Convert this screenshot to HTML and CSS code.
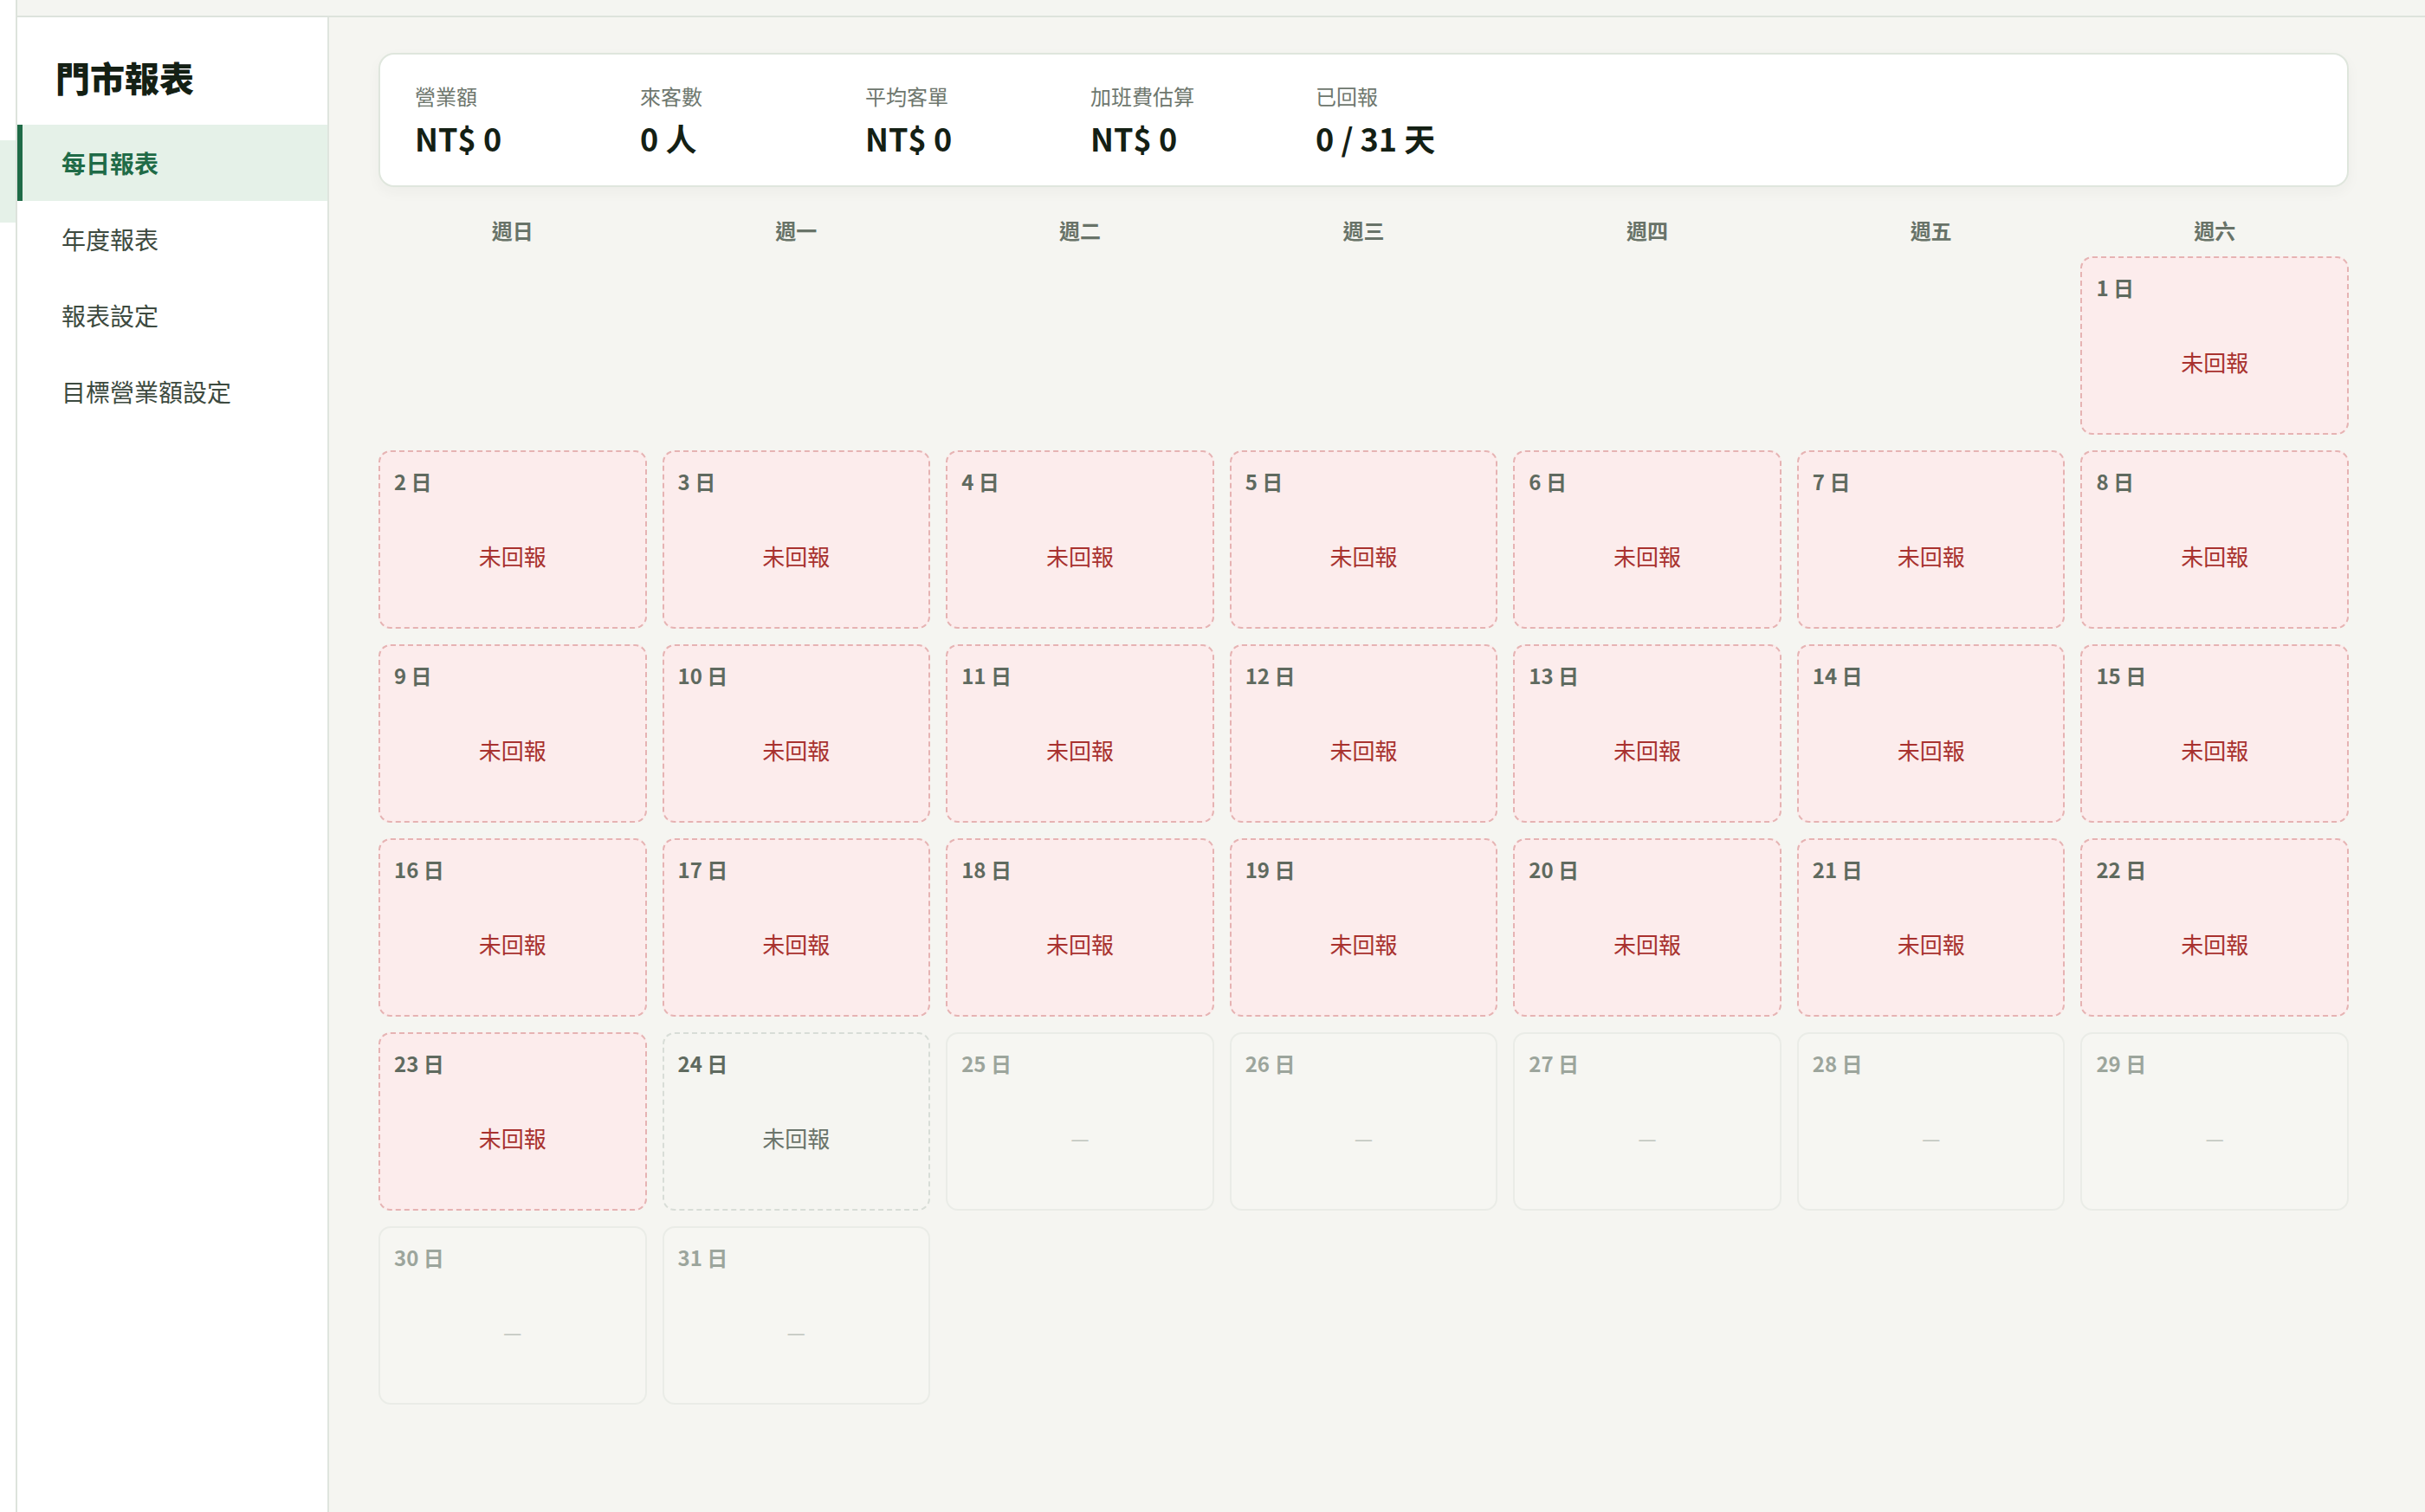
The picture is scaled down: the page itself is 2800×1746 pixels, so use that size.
FILE: index.html
```html
<!DOCTYPE html>
<html lang="zh-Hant">
<head>
	<meta charset="utf-8">
	<title>門市報表</title>
	<link rel="stylesheet" href="styles.css">
</head>
<body>

<div class="shell">
	<div class="edge"><div class="edge-mark"></div></div>

	<div class="app">
		<div class="topbar"></div>

		<div class="layout">
			<aside class="sidebar">
				<h1 class="brand">門市報表</h1>
				<nav class="nav">
					<a class="active" href="#">每日報表</a>
					<a href="#">年度報表</a>
					<a href="#">報表設定</a>
					<a href="#">目標營業額設定</a>
				</nav>
			</aside>

			<main class="main">
				<section class="summary">
					<div class="stat">
						<div class="stat-label">營業額</div>
						<div class="stat-value">NT$ 0</div>
					</div>
					<div class="stat">
						<div class="stat-label">來客數</div>
						<div class="stat-value">0 人</div>
					</div>
					<div class="stat">
						<div class="stat-label">平均客單</div>
						<div class="stat-value">NT$ 0</div>
					</div>
					<div class="stat">
						<div class="stat-label">加班費估算</div>
						<div class="stat-value">NT$ 0</div>
					</div>
					<div class="stat">
						<div class="stat-label">已回報</div>
						<div class="stat-value">0 / 31 天</div>
					</div>
				</section>

				<section class="calendar">
					<div class="weekday">週日</div>
					<div class="weekday">週一</div>
					<div class="weekday">週二</div>
					<div class="weekday">週三</div>
					<div class="weekday">週四</div>
					<div class="weekday">週五</div>
					<div class="weekday">週六</div>

					<div class="blank"></div>
					<div class="blank"></div>
					<div class="blank"></div>
					<div class="blank"></div>
					<div class="blank"></div>
					<div class="blank"></div>
					<div class="day missed"><div class="day-num">1 日</div><div class="day-status">未回報</div></div>

					<div class="day missed"><div class="day-num">2 日</div><div class="day-status">未回報</div></div>
					<div class="day missed"><div class="day-num">3 日</div><div class="day-status">未回報</div></div>
					<div class="day missed"><div class="day-num">4 日</div><div class="day-status">未回報</div></div>
					<div class="day missed"><div class="day-num">5 日</div><div class="day-status">未回報</div></div>
					<div class="day missed"><div class="day-num">6 日</div><div class="day-status">未回報</div></div>
					<div class="day missed"><div class="day-num">7 日</div><div class="day-status">未回報</div></div>
					<div class="day missed"><div class="day-num">8 日</div><div class="day-status">未回報</div></div>

					<div class="day missed"><div class="day-num">9 日</div><div class="day-status">未回報</div></div>
					<div class="day missed"><div class="day-num">10 日</div><div class="day-status">未回報</div></div>
					<div class="day missed"><div class="day-num">11 日</div><div class="day-status">未回報</div></div>
					<div class="day missed"><div class="day-num">12 日</div><div class="day-status">未回報</div></div>
					<div class="day missed"><div class="day-num">13 日</div><div class="day-status">未回報</div></div>
					<div class="day missed"><div class="day-num">14 日</div><div class="day-status">未回報</div></div>
					<div class="day missed"><div class="day-num">15 日</div><div class="day-status">未回報</div></div>

					<div class="day missed"><div class="day-num">16 日</div><div class="day-status">未回報</div></div>
					<div class="day missed"><div class="day-num">17 日</div><div class="day-status">未回報</div></div>
					<div class="day missed"><div class="day-num">18 日</div><div class="day-status">未回報</div></div>
					<div class="day missed"><div class="day-num">19 日</div><div class="day-status">未回報</div></div>
					<div class="day missed"><div class="day-num">20 日</div><div class="day-status">未回報</div></div>
					<div class="day missed"><div class="day-num">21 日</div><div class="day-status">未回報</div></div>
					<div class="day missed"><div class="day-num">22 日</div><div class="day-status">未回報</div></div>

					<div class="day missed"><div class="day-num">23 日</div><div class="day-status">未回報</div></div>
					<div class="day today"><div class="day-num">24 日</div><div class="day-status">未回報</div></div>
					<div class="day future"><div class="day-num">25 日</div><div class="day-status">—</div></div>
					<div class="day future"><div class="day-num">26 日</div><div class="day-status">—</div></div>
					<div class="day future"><div class="day-num">27 日</div><div class="day-status">—</div></div>
					<div class="day future"><div class="day-num">28 日</div><div class="day-status">—</div></div>
					<div class="day future"><div class="day-num">29 日</div><div class="day-status">—</div></div>

					<div class="day future"><div class="day-num">30 日</div><div class="day-status">—</div></div>
					<div class="day future"><div class="day-num">31 日</div><div class="day-status">—</div></div>
				</section>
			</main>
		</div>
	</div>
</div>

</body>
</html>
```

FILE: styles.css
```css
body {margin: 0; background: #fff; color: #1b261c;
		font-family: "Noto Sans CJK TC", "Noto Sans", sans-serif;}

.shell {display: flex; min-height: 1746px;}
.edge {width: 18px; background: #fff; border-right: 2px solid #dde3dc;}
.edge-mark {margin-top: 162px; height: 95px; background: #e5f1e8;}

.app {flex: 1; display: flex; flex-direction: column;}
.topbar {height: 18px; background: #f4f5f1; border-bottom: 2px solid #dde3dc;}
.layout {flex: 1; display: flex;}

/* sidebar */
.sidebar {width: 360px; box-sizing: border-box; background: #fff; border-right: 2px solid #dfe5de;}
.brand {margin: 0; padding: 39px 0 25px 44px; font-size: 40px; line-height: 60px; font-weight: 900; color: #142014;}
.nav a {display: block; height: 88px; line-height: 88px; padding-left: 45px; border-left: 6px solid transparent;
		font-size: 28px; color: #3d4a40; text-decoration: none;}
.nav a.active {background: #e5f1e8; border-left-color: #1f6b47; color: #1f6b47; font-weight: 700;}

/* main */
.main {flex: 1; background: #f5f5f1; padding: 41px 88px 0 57px;}

.summary {display: flex; gap: 60px; padding: 30px 40px 32px; background: #fff;
		border: 2px solid #dfe6dd; border-radius: 18px; box-shadow: 0 6px 16px rgba(40, 60, 40, 0.04);}
.stat {width: 200px;}
.stat-label {font-size: 24px; line-height: 36px; color: #6e776e;}
.stat-value {margin-top: 7px; font-size: 36px; line-height: 46px; font-weight: 700; color: #142014;}

/* calendar */
.calendar {display: grid; grid-template-columns: repeat(7, 1fr); gap: 18px; margin-top: 38px;}
.weekday {text-align: center; font-size: 24px; line-height: 24px; font-weight: 700; color: #687368;}

.day {height: 206px; box-sizing: border-box; display: flex; flex-direction: column;
		padding: 16px; border-radius: 14px; border: 2px solid #eaece7;}
.day-num {font-size: 24px; line-height: 36px; font-weight: 700; color: #5f6a5f;}
.day-status {flex: 1; display: flex; align-items: center; justify-content: center; font-size: 26px;}

.missed {background: #fcecec; border: 2px dashed #e6b3b3;}
.missed .day-status {color: #a8322f;}
.today {border: 2px dashed #d8ddd7;}
.today .day-status {color: #6a746a;}
.future {background: #f6f6f2;}
.future .day-num {color: #9ca59c;}
.future .day-status {font-size: 24px; color: #bfc4bd;}
```
